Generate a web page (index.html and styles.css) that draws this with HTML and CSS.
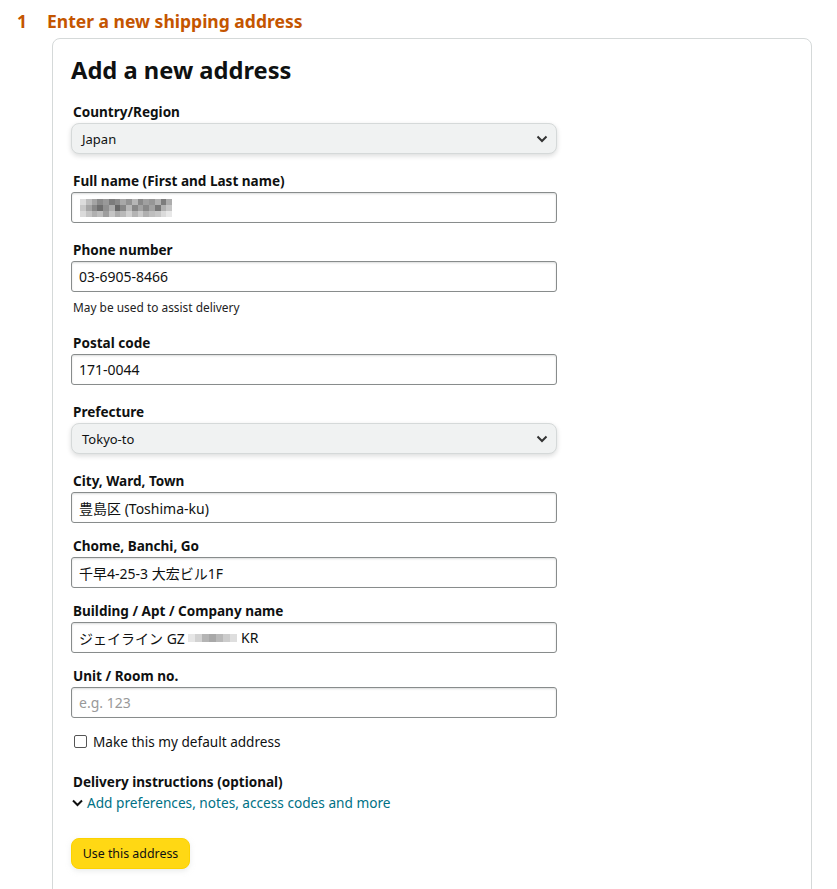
FILE: index.html
```html
<!DOCTYPE html>
<html>
<head>
<meta charset="utf-8">
<link rel="stylesheet" href="styles.css">
</head>
<body>
<div class="step">
  <h2 class="step-title"><span class="step-num">1</span>Enter a new shipping address</h2>
  <div class="card">
    <h1 class="card-title">Add a new address</h1>

    <div class="field f-first">
      <label class="lbl">Country/Region</label>
      <div class="select"><span>Japan</span>
        <svg class="chev" width="12" height="8" viewBox="0 0 12 8"><path d="M1.5 1.5 L6 6 L10.5 1.5" fill="none" stroke="#333" stroke-width="2"/></svg>
      </div>
    </div>

    <div class="field f-wide">
      <label class="lbl">Full name (First and Last name)</label>
      <div class="input"><span class="pix">
        <i style="background:#dcdcdc"></i><i style="background:#bdbdbd"></i><i style="background:#a4a4a4"></i><i style="background:#8a8a8a"></i><i style="background:#999"></i><i style="background:#7c7c7c"></i><i style="background:#8a8a8a"></i><i style="background:#a8a8a8"></i><i style="background:#939393"></i><i style="background:#b6b6b6"></i><i style="background:#898989"></i><i style="background:#a0a0a0"></i><i style="background:#969696"></i><i style="background:#b0b0b0"></i><i style="background:#7c7c7c"></i><i style="background:#acacac"></i>
        <i style="background:#c8c8c8"></i><i style="background:#a5a5a5"></i><i style="background:#888"></i><i style="background:#6e6e6e"></i><i style="background:#909090"></i><i style="background:#ababab"></i><i style="background:#666"></i><i style="background:#878787"></i><i style="background:#b7b7b7"></i><i style="background:#878787"></i><i style="background:#a2a2a2"></i><i style="background:#888"></i><i style="background:#a1a1a1"></i><i style="background:#777"></i><i style="background:#b0b0b0"></i><i style="background:#c5c5c5"></i>
        <i style="background:#dadada"></i><i style="background:#c4c4c4"></i><i style="background:#b0b0b0"></i><i style="background:#bdbdbd"></i><i style="background:#9e9e9e"></i><i style="background:#c4c4c4"></i><i style="background:#ababab"></i><i style="background:#b9b9b9"></i><i style="background:#d0d0d0"></i><i style="background:#b4b4b4"></i><i style="background:#cacaca"></i><i style="background:#b0b0b0"></i><i style="background:#bebebe"></i><i style="background:#c6c6c6"></i><i style="background:#dadada"></i><i style="background:#e8e8e8"></i>
      </span></div>
    </div>

    <div class="field f-wide">
      <label class="lbl">Phone number</label>
      <div class="input">03-6905-8466</div>
      <div class="hint">May be used to assist delivery</div>
    </div>

    <div class="field f-hint">
      <label class="lbl">Postal code</label>
      <div class="input">171-0044</div>
    </div>

    <div class="field f-wide">
      <label class="lbl">Prefecture</label>
      <div class="select"><span>Tokyo-to</span>
        <svg class="chev" width="12" height="8" viewBox="0 0 12 8"><path d="M1.5 1.5 L6 6 L10.5 1.5" fill="none" stroke="#333" stroke-width="2"/></svg>
      </div>
    </div>

    <div class="field f-wide">
      <label class="lbl">City, Ward, Town</label>
      <div class="input">豊島区 (Toshima-ku)</div>
    </div>

    <div class="field">
      <label class="lbl">Chome, Banchi, Go</label>
      <div class="input">千早4-25-3 大宏ビル1F</div>
    </div>

    <div class="field">
      <label class="lbl">Building / Apt / Company name</label>
      <div class="input">ジェイライン GZ <span class="pix2"><i style="background:#e6e6e6"></i><i style="background:#d2d2d2"></i><i style="background:#b4b4b4"></i><i style="background:#a8a8a8"></i><i style="background:#b9b9b9"></i><i style="background:#cccccc"></i><i style="background:#dedede"></i></span> KR</div>
    </div>

    <div class="field">
      <label class="lbl">Unit / Room no.</label>
      <div class="input placeholder">e.g. 123</div>
    </div>

    <label class="check"><span class="box"></span>Make this my default address</label>

    <div class="delivery">
      <div class="lbl">Delivery instructions (optional)</div>
      <a class="link"><svg width="11" height="8" viewBox="0 0 11 8"><path d="M1 1.5 L5.5 6 L10 1.5" fill="none" stroke="#111" stroke-width="2"/></svg>Add preferences, notes, access codes and more</a>
    </div>

    <button class="btn">Use this address</button>
  </div>
</div>
</body>
</html>
```
FILE: styles.css
```css
* { box-sizing: border-box; }
body {
  margin: 0;
  background: #fff;
  font-family: "Noto Sans", "Noto Sans CJK JP", sans-serif;
  color: #0f1111;
}
.step { padding: 9px 25px 0 17px; }
.step-title {
  margin: 0;
  font-size: 17.5px;
  font-weight: 700;
  color: #c45500;
  line-height: 24px;
  display: flex;
}
.step-num { width: 30px; }
.card {
  margin: 5px 0 0 35px;
  border: 1px solid #d5d9d9;
  border-radius: 8px;
  padding: 16px 18px 20px 18px;
  height: 880px;
}
.card-title {
  margin: 0;
  font-size: 23.7px;
  line-height: 30px;
  font-weight: 700;
}
.field { width: 486px; margin-top: 14px; }
.field.f-first { margin-top: 18px; }
.field.f-wide { margin-top: 18px; }
.field.f-hint { margin-top: 19px; }
.lbl {
  display: block;
  font-size: 13.55px;
  font-weight: 700;
  line-height: 19px;
  padding-left: 2px;
  margin-bottom: 1px;
}
.select {
  height: 31px;
  background: #f0f2f2;
  border: 1px solid #d5d9d9;
  border-radius: 8px;
  box-shadow: 0 2px 5px rgba(15,17,17,.15);
  display: flex;
  align-items: center;
  justify-content: space-between;
  padding: 0 8px 0 10px;
  font-size: 13px;
}
.input {
  height: 31px;
  border: 1px solid #888c8c;
  border-radius: 3px;
  box-shadow: 0 1px 2px rgba(15,17,17,.15) inset;
  display: flex;
  align-items: center;
  padding: 0 7px;
  font-size: 14px;
  white-space: pre;
}
.input.placeholder { color: #999; }
.hint { font-size: 11.9px; line-height: 16px; margin-top: 7px; padding-left: 2px; color: #222; }
.pix { display: grid; grid-template-columns: repeat(16, 5.75px); grid-auto-rows: 6px; margin-left: 1px; }
.pix i { display: block; }
.pix2 { display: inline-grid; grid-template-columns: repeat(7, 7px); grid-auto-rows: 8px; vertical-align: middle; }
.pix2 i { display: block; }
.check {
  display: flex;
  align-items: center;
  margin-top: 14px;
  font-size: 13.6px;
  padding-left: 3px;
}
.box {
  width: 13px; height: 13px;
  border: 1px solid #555;
  border-radius: 2px;
  margin-right: 6px;
}
.delivery { margin-top: 22px; }
.link {
  display: flex;
  align-items: center;
  font-size: 13.65px;
  color: #007185;
  margin-top: 1px;
}
.link svg { margin-right: 4px; margin-left: 1px; }
.btn {
  margin-top: 26px;
  background: #ffd814;
  border: 1px solid #fcd200;
  border-radius: 8px;
  height: 31px;
  width: 119px;
  font-family: inherit;
  font-size: 12.4px;
  color: #0f1111;
  box-shadow: 0 2px 5px rgba(213,217,217,.5);
}
```
